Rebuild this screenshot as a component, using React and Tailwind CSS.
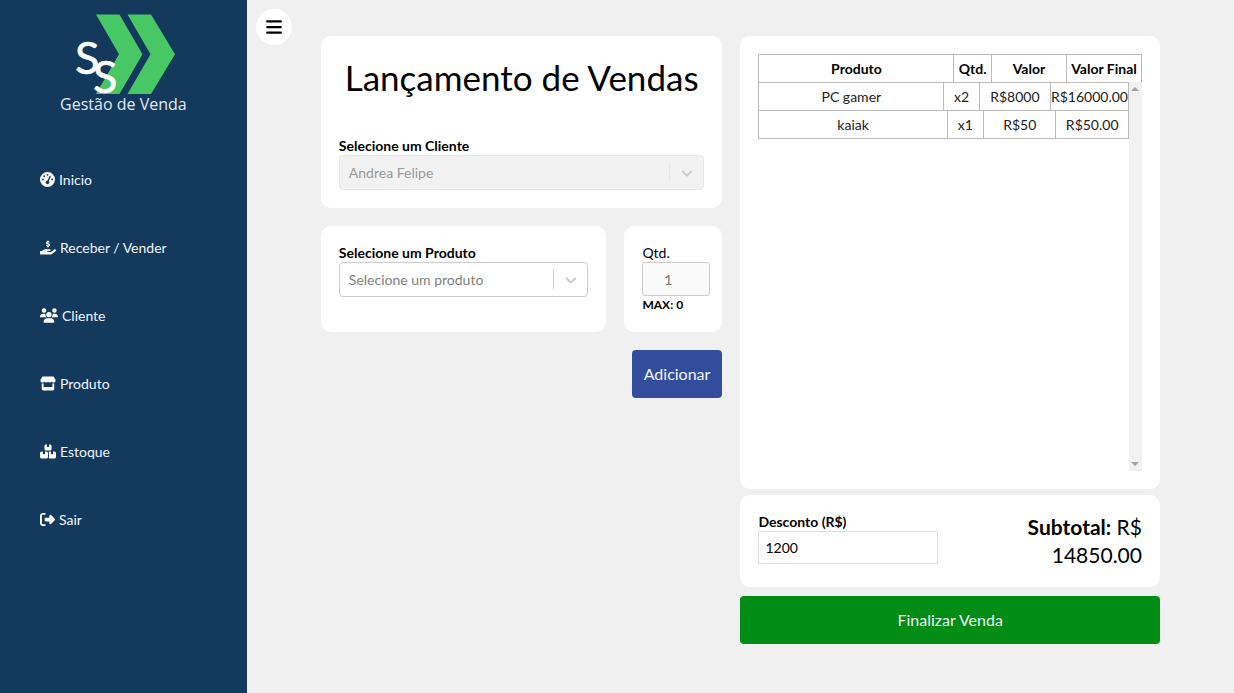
import {
  FaGaugeHigh,
  FaHandHoldingDollar,
  FaUsers,
  FaStore,
  FaBoxesStacked,
  FaRightFromBracket,
  FaBars,
} from "react-icons/fa6";

const menu = [
  { label: "Inicio", Icon: FaGaugeHigh, size: "w-[15px]" },
  { label: "Receber / Vender", Icon: FaHandHoldingDollar, size: "w-4" },
  { label: "Cliente", Icon: FaUsers, size: "w-[18px]" },
  { label: "Produto", Icon: FaStore, size: "w-4" },
  { label: "Estoque", Icon: FaBoxesStacked, size: "w-4" },
  { label: "Sair", Icon: FaRightFromBracket, size: "w-[15px]" },
];

const items = [
  { name: "PC gamer", qty: "x2", price: "R$8000", total: "R$16000.00" },
  { name: "kaiak", qty: "x1", price: "R$50", total: "R$50.00" },
];

function Logo() {
  return (
    <div className="flex flex-col items-center">
      <svg viewBox="0 0 130 82" className="h-[82px] w-[130px] overflow-visible" aria-hidden="true">
        <path d="M38 1.500h23.500l23 39.800-23 39.700H38l23-39.700z" fill="#48c765" />
        <path d="M69.500 1.500H93l24 39.800-24 39.700H69.500l23-39.700z" fill="#48c765" />
        <g fill="#fff" stroke="#fff" strokeWidth="0.6" fontFamily="Lato, sans-serif" fontSize="45">
          <text x="17" y="61">S</text>
          <text x="35" y="80">S</text>
        </g>
      </svg>
      <span className="font-['Open_Sans','Noto_Sans',sans-serif] text-[16px] leading-[18px] text-slate-200">
        Gestão de Venda
      </span>
    </div>
  );
}

function Sidebar() {
  return (
    <aside className="w-1/5 shrink-0 bg-[#13395c] pt-[13px] text-slate-100">
      <Logo />
      <nav className="mt-8 flex flex-col pl-10">
        {menu.map(({ label, Icon, size }) => (
          <a key={label} href="#" className="flex h-[68px] items-center gap-1 text-[14px]">
            <Icon className={`h-[15px] shrink-0 text-white ${size}`} />
            {label}
          </a>
        ))}
      </nav>
    </aside>
  );
}

function Select({ id, label, value, disabled }) {
  const box = disabled
    ? "border-[#e6e6e6] bg-[#f2f2f2] text-[#999999]"
    : "border-[#cccccc] bg-white text-[#808080]";
  const line = disabled ? "bg-[#e6e6e6]" : "bg-[#cccccc]";
  return (
    <div>
      <label htmlFor={id} className="block text-[14px] leading-[18px] font-bold">
        {label}
      </label>
      <div className="relative">
        <select
          id={id}
          disabled={disabled}
          className={`block h-[35px] w-full appearance-none rounded border px-[9px] text-[14px] opacity-100 ${box}`}
        >
          <option>{value}</option>
        </select>
        <div className="pointer-events-none absolute inset-y-0 right-0 flex items-center py-2">
          <span className={`h-full w-px ${line}`} />
          <svg viewBox="0 0 20 20" className="mx-2 h-[18px] w-[18px] fill-[#cccccc]" aria-hidden="true">
            <path d="M4.516 7.548c0.436-0.446 1.043-0.481 1.576 0l3.908 3.747 3.908-3.747c0.533-0.481 1.141-0.446 1.574 0 0.436 0.445 0.408 1.197 0 1.615-0.406 0.418-4.695 4.502-4.695 4.502-0.217 0.223-0.502 0.335-0.787 0.335s-0.570-0.112-0.789-0.335c0 0-4.287-4.084-4.695-4.502s-0.436-1.170 0-1.615z" />
          </svg>
        </div>
      </div>
    </div>
  );
}

function Card({ className = "", children }) {
  return <section className={`rounded-[10px] bg-white p-[18px] ${className}`}>{children}</section>;
}

function Items() {
  const row = "grid grid-cols-[26fr_5fr_10fr_10fr] border-b border-l border-[#bbbbbb]";
  const cell = "flex h-[27px] items-center justify-center border-r border-[#bbbbbb] p-0";
  return (
    <div className="relative">
      <table className="block text-[14px] leading-5">
        <thead className="block">
          <tr className={`${row} border-t`}>
            {["Produto", "Qtd.", "Valor", "Valor Final"].map((title) => (
              <th key={title} scope="col" className={`${cell} font-bold`}>
                {title}
              </th>
            ))}
          </tr>
        </thead>
        <tbody className="block h-[388px] pr-[13px] text-[#222222]">
          {items.map((item) => (
            <tr key={item.name} className={row}>
              <td className={cell}>{item.name}</td>
              <td className={cell}>{item.qty}</td>
              <td className={cell}>{item.price}</td>
              <td className={cell}>{item.total}</td>
            </tr>
          ))}
        </tbody>
      </table>
      <div
        className="absolute top-7 right-0 bottom-0 flex w-[13px] flex-col items-center justify-between bg-[#f1f1f1] py-[5px]"
        aria-hidden="true"
      >
        <span className="border-x-[4px] border-b-[4px] border-x-transparent border-b-[#a3a3a3]" />
        <span className="border-x-[4px] border-t-[4px] border-x-transparent border-t-[#a3a3a3]" />
      </div>
    </div>
  );
}

export default function App() {
  return (
    <div className="flex min-h-screen bg-[#f0f0f0] font-['Lato','Noto_Sans',sans-serif] text-black">
      <Sidebar />
      <main className="relative min-w-0 flex-1">
        <button
          type="button"
          aria-label="Menu"
          className="absolute top-[9px] left-[9px] flex size-9 items-center justify-center rounded-full bg-white"
        >
          <FaBars className="size-[18px]" />
        </button>
        <div className="mx-auto grid w-[85%] grid-cols-[67fr_70fr] items-start gap-[18px] pt-9">
          <div className="flex flex-col gap-[18px]">
            <Card>
              <h1 className="mb-9 text-center text-[35px] leading-[47px] whitespace-nowrap">
                Lançamento de Vendas
              </h1>
              <Select id="cliente" label="Selecione um Cliente" value="Andrea Felipe" disabled />
            </Card>
            <div className="flex gap-[18px]">
              <Card className="flex-1">
                <Select id="produto" label="Selecione um Produto" value="Selecione um produto" />
              </Card>
              <Card className="w-[98px] shrink-0">
                <label htmlFor="qtd" className="block text-[14px] leading-[18px]">
                  Qtd.
                </label>
                <input
                  id="qtd"
                  type="text"
                  defaultValue="1"
                  disabled
                  className="block h-[34px] w-[68px] rounded-[3px] border border-[#cccccc] bg-[#fafafa] pr-4 text-center text-[14px] text-[#777777]"
                />
                <p className="text-[12px] leading-[18px] font-bold">MAX: 0</p>
              </Card>
            </div>
            <button
              type="button"
              className="h-12 self-end rounded bg-[#334d9d] px-3 text-[16px] text-slate-100"
            >
              Adicionar
            </button>
          </div>
          <div className="flex flex-col">
            <Card>
              <Items />
            </Card>
            <Card className="mt-[6px] flex justify-between">
              <div className="w-[180px]">
                <label htmlFor="desconto" className="block text-[14px] leading-[18px] font-bold">
                  Desconto (R$)
                </label>
                <input
                  id="desconto"
                  type="text"
                  defaultValue="1200"
                  className="block h-[33px] w-full border border-[#dddddd] px-[6px] text-[14px]"
                />
              </div>
              <p className="w-[120px] text-right text-[21px] leading-7">
                <strong>Subtotal:</strong> R$ 14850.00
              </p>
            </Card>
            <button
              type="button"
              className="mt-[9px] h-12 rounded bg-[#008c15] text-[16px] text-slate-100"
            >
              Finalizar Venda
            </button>
          </div>
        </div>
      </main>
    </div>
  );
}
